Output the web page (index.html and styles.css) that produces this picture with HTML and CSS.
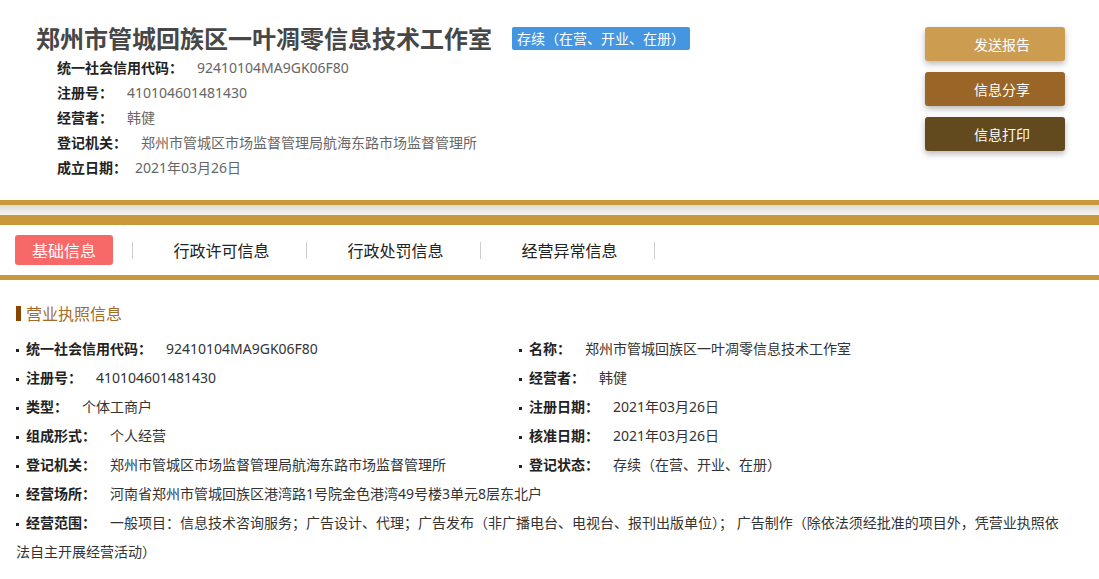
FILE: index.html
```html
<!DOCTYPE html>
<html lang="zh-CN">
<head>
<meta charset="utf-8">
<title>郑州市管城回族区一叶凋零信息技术工作室</title>
<link rel="stylesheet" href="styles.css">
</head>
<body>
<header class="header">
  <div class="header-main">
    <div class="title-row">
      <h1 class="title">郑州市管城回族区一叶凋零信息技术工作室</h1>
      <span class="badge">存续（在营、开业、在册）</span>
    </div>
    <div class="info-row"><span class="info-label">统一社会信用代码：</span><span class="info-value">92410104MA9GK06F80</span></div>
    <div class="info-row"><span class="info-label">注册号：</span><span class="info-value">410104601481430</span></div>
    <div class="info-row"><span class="info-label">经营者：</span><span class="info-value">韩健</span></div>
    <div class="info-row"><span class="info-label">登记机关：</span><span class="info-value">郑州市管城区市场监督管理局航海东路市场监督管理所</span></div>
    <div class="info-row"><span class="info-label">成立日期：</span><span class="info-value info-value-tight">2021年03月26日</span></div>
  </div>
  <div class="actions">
    <button class="btn btn-send">发送报告</button>
    <button class="btn btn-share">信息分享</button>
    <button class="btn btn-print">信息打印</button>
  </div>
</header>

<div class="band">
  <div class="band-line"></div>
  <div class="band-shade"></div>
  <div class="band-thick"></div>
</div>

<nav class="tabs">
  <span class="tab tab-active">基础信息</span>
  <span class="tab-sep"></span>
  <span class="tab">行政许可信息</span>
  <span class="tab-sep"></span>
  <span class="tab">行政处罚信息</span>
  <span class="tab-sep"></span>
  <span class="tab">经营异常信息</span>
  <span class="tab-sep"></span>
</nav>
<div class="band-line"></div>

<section class="section">
  <h2 class="section-title">营业执照信息</h2>
  <div class="fields">
    <div class="field"><span class="field-label">统一社会信用代码：</span><span class="field-value">92410104MA9GK06F80</span></div>
    <div class="field"><span class="field-label">名称：</span><span class="field-value">郑州市管城回族区一叶凋零信息技术工作室</span></div>
    <div class="field"><span class="field-label">注册号：</span><span class="field-value">410104601481430</span></div>
    <div class="field"><span class="field-label">经营者：</span><span class="field-value">韩健</span></div>
    <div class="field"><span class="field-label">类型：</span><span class="field-value">个体工商户</span></div>
    <div class="field"><span class="field-label">注册日期：</span><span class="field-value">2021年03月26日</span></div>
    <div class="field"><span class="field-label">组成形式：</span><span class="field-value">个人经营</span></div>
    <div class="field"><span class="field-label">核准日期：</span><span class="field-value">2021年03月26日</span></div>
    <div class="field"><span class="field-label">登记机关：</span><span class="field-value">郑州市管城区市场监督管理局航海东路市场监督管理所</span></div>
    <div class="field"><span class="field-label">登记状态：</span><span class="field-value">存续（在营、开业、在册）</span></div>
    <div class="field field-wide"><span class="field-label">经营场所：</span><span class="field-value">河南省郑州市管城回族区港湾路1号院金色港湾49号楼3单元8层东北户</span></div>
    <p class="field field-wide field-text"><span class="field-label field-label-gap">经营范围：</span>一般项目：信息技术咨询服务；广告设计、代理；广告发布（非广播电台、电视台、报刊出版单位）； 广告制作（除依法须经批准的项目外，凭营业执照依法自主开展经营活动）</p>
  </div>
</section>
</body>
</html>
```

FILE: styles.css
```css
* { box-sizing: border-box; }

body {
  margin: 0;
  background: #ffffff;
  font-family: "Noto Sans", "Noto Sans CJK SC", sans-serif;
  font-size: 14px;
  color: #333333;
}

.header {
  display: flex;
  justify-content: space-between;
  padding: 21px 34px 0 36px;
  height: 200px;
}

.title-row {
  display: flex;
  align-items: center;
  gap: 19px;
  height: 34px;
}

.title {
  margin: 0;
  font-family: "Noto Sans CJK SC", sans-serif;
  font-size: 24px;
  font-weight: 700;
  line-height: 34px;
  color: #474747;
}

.badge {
  display: inline-block;
  background: #4596e0;
  color: #ffffff;
  font-family: "Noto Sans CJK SC", sans-serif;
  font-size: 14px;
  line-height: 23px;
  height: 23px;
  padding: 0 5px;
  border-radius: 2px;
  margin-left: 1px;
}

.info-row {
  padding-left: 21px;
  line-height: 25px;
  height: 25px;
  white-space: nowrap;
}

.info-label {
  font-weight: 700;
  color: #222222;
}

.info-value {
  color: #666666;
  margin-left: 14px;
}

.info-value-tight { margin-left: 8px; }

.actions {
  display: flex;
  flex-direction: column;
  gap: 11px;
  padding-top: 6px;
}

.btn {
  width: 140px;
  height: 34px;
  border: none;
  border-radius: 3px;
  color: #ffffff;
  font-family: "Noto Sans CJK SC", sans-serif;
  font-size: 14px;
  padding: 0 0 0 14px;
  box-shadow: 0 3px 6px rgba(0, 0, 0, 0.28);
}

.btn-send { background: #cc9d51; }
.btn-share { background: #996628; }
.btn-print { background: #63491e; }

.band-line {
  height: 5px;
  background: #c9983a;
}

.band-shade {
  height: 10px;
  background: linear-gradient(to bottom, #dddad2, #f6f5f2);
}

.band-thick {
  height: 10px;
  background: #c9983a;
}

.tabs {
  display: flex;
  align-items: center;
  height: 50px;
  padding-left: 15px;
}

.tab {
  font-family: "Noto Sans CJK SC", sans-serif;
  font-size: 16px;
  color: #222222;
  line-height: 30px;
  width: 173px;
  padding-left: 4px;
  text-align: center;
}

.tab-active {
  width: 98px;
  padding-left: 0;
  background: #f76868;
  color: #ffffff;
  border-radius: 3px;
  margin-right: 19px;
}

.tab-sep {
  width: 1px;
  height: 17px;
  background: #cccccc;
}

.section {
  padding: 21px 16px 0 16px;
}

.section-title {
  margin: 0;
  display: flex;
  align-items: center;
  font-family: "Noto Sans CJK SC", sans-serif;
  font-size: 16px;
  font-weight: 400;
  line-height: 24px;
  color: #a56c2b;
}

.section-title::before {
  content: "";
  width: 5px;
  height: 15px;
  background: #8a4600;
  margin-right: 5px;
}

.fields {
  display: grid;
  grid-template-columns: 503px 1fr;
  margin-top: 9px;
  padding-right: 14px;
}

.field {
  line-height: 29px;
  margin: 0;
}

.field::before {
  content: "";
  display: inline-block;
  width: 3px;
  height: 3px;
  background: #222222;
  margin: 0 7px 0 0;
  vertical-align: middle;
}

.field-wide {
  grid-column: 1 / -1;
}

.field-text {
  color: #333333;
}

.field-label {
  font-weight: 700;
  color: #222222;
}

.field-label-gap {
  margin-right: 14px;
}

.field-value {
  color: #333333;
  margin-left: 14px;
}
```
